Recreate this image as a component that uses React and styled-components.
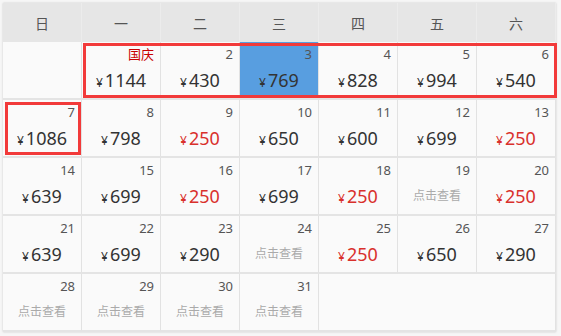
import React from 'react';
import styled, { createGlobalStyle } from 'styled-components';

const GlobalStyle = createGlobalStyle`
	body {
		margin: 0;
		padding: 3px;
		background: #f6f6f6;
		font-family: "Noto Sans", "Noto Sans CJK SC", sans-serif;
	}
`

const weekDays = ['日', '一', '二', '三', '四', '五', '六'];

// price null means "点击查看", low = cheap fare shown in red
const days = [
	{ d: 1, label: '国庆', price: 1144 },
	{ d: 2, price: 430 },
	{ d: 3, price: 769, active: true },
	{ d: 4, price: 828 },
	{ d: 5, price: 994 },
	{ d: 6, price: 540 },
	{ d: 7, price: 1086 },
	{ d: 8, price: 798 },
	{ d: 9, price: 250, low: true },
	{ d: 10, price: 650 },
	{ d: 11, price: 600 },
	{ d: 12, price: 699 },
	{ d: 13, price: 250, low: true },
	{ d: 14, price: 639 },
	{ d: 15, price: 699 },
	{ d: 16, price: 250, low: true },
	{ d: 17, price: 699 },
	{ d: 18, price: 250, low: true },
	{ d: 19, price: null },
	{ d: 20, price: 250, low: true },
	{ d: 21, price: 639 },
	{ d: 22, price: 699 },
	{ d: 23, price: 290 },
	{ d: 24, price: null },
	{ d: 25, price: 250, low: true },
	{ d: 26, price: 650 },
	{ d: 27, price: 290 },
	{ d: 28, price: null },
	{ d: 29, price: null },
	{ d: 30, price: null },
	{ d: 31, price: null },
];

export default function App() {
	return (
		<>
			<GlobalStyle />
			<Calendar>
				{weekDays.map((w, i) => (
					<Head key={w} $col={i + 1}>{w}</Head>
				))}
				<Cell $col={1} $row={2} />
				{days.map((day) => (
					<Cell
						key={day.d}
						$col={(day.d % 7) + 1}
						$row={Math.floor(day.d / 7) + 2}
						$active={day.active}
					>
						<DayNum $holiday={!!day.label}>{day.label || day.d}</DayNum>
						{day.price === null ? (
							<More>点击查看</More>
						) : (
							<Price $low={day.low}>
								<Yen>¥</Yen>
								{day.price}
							</Price>
						)}
					</Cell>
				))}
				<Filler />
				<Highlight $col="2 / 8" $row="2" />
				<Highlight $col="1 / 2" $row="3" $inset />
			</Calendar>
		</>
	)
}

const Calendar = styled.div`
	width: 553px;
	display: grid;
	grid-template-columns: repeat(7, 79px);
	grid-template-rows: 39px repeat(5, 58px);
	background: #fafafa;
	box-shadow: 0 0 2px rgba(0, 0, 0, 0.18);
`

const Head = styled.div`
	grid-row: 1;
	grid-column: ${(p) => p.$col};
	display: flex;
	align-items: center;
	justify-content: center;
	background: #e6e6e6;
	border-right: 1px solid #ececec;
	color: #555;
	font-size: 14px;
	padding-top: 1px;
`

const Cell = styled.div`
	grid-row: ${(p) => p.$row};
	grid-column: ${(p) => p.$col};
	box-sizing: border-box;
	height: 58px;
	padding: 4px 6px 0;
	border-right: 1px solid #e2e2e2;
	border-bottom: 2px solid #e4e4e4;
	background: ${(p) => (p.$active ? '#589ee0' : '#fafafa')};
	display: flex;
	flex-direction: column;
	align-items: center;
`

const Filler = styled.div`
	grid-row: 6;
	grid-column: 5 / 8;
	border-bottom: 2px solid #e4e4e4;
	border-right: 1px solid #e2e2e2;
`

const DayNum = styled.div`
	align-self: stretch;
	text-align: right;
	font-size: 13px;
	line-height: 16px;
	color: ${(p) => (p.$holiday ? '#c80000' : '#555')};
`

const Price = styled.div`
	margin-top: 7px;
	font-size: 18px;
	line-height: 22px;
	color: ${(p) => (p.$low ? '#d9302c' : '#333')};
`

const Yen = styled.span`
	font-size: 12px;
	margin-right: 2px;
`

const More = styled.div`
	margin-top: 10px;
	font-size: 12px;
	line-height: 16px;
	color: #aaa;
`

const Highlight = styled.div`
	grid-column: ${(p) => p.$col};
	grid-row: ${(p) => p.$row};
	border: 3px solid #f23a3a;
	margin: ${(p) => (p.$inset ? '2px 1px 3px 2px' : '1px -1px 2px 1px')};
	pointer-events: none;
	z-index: 1;
`
